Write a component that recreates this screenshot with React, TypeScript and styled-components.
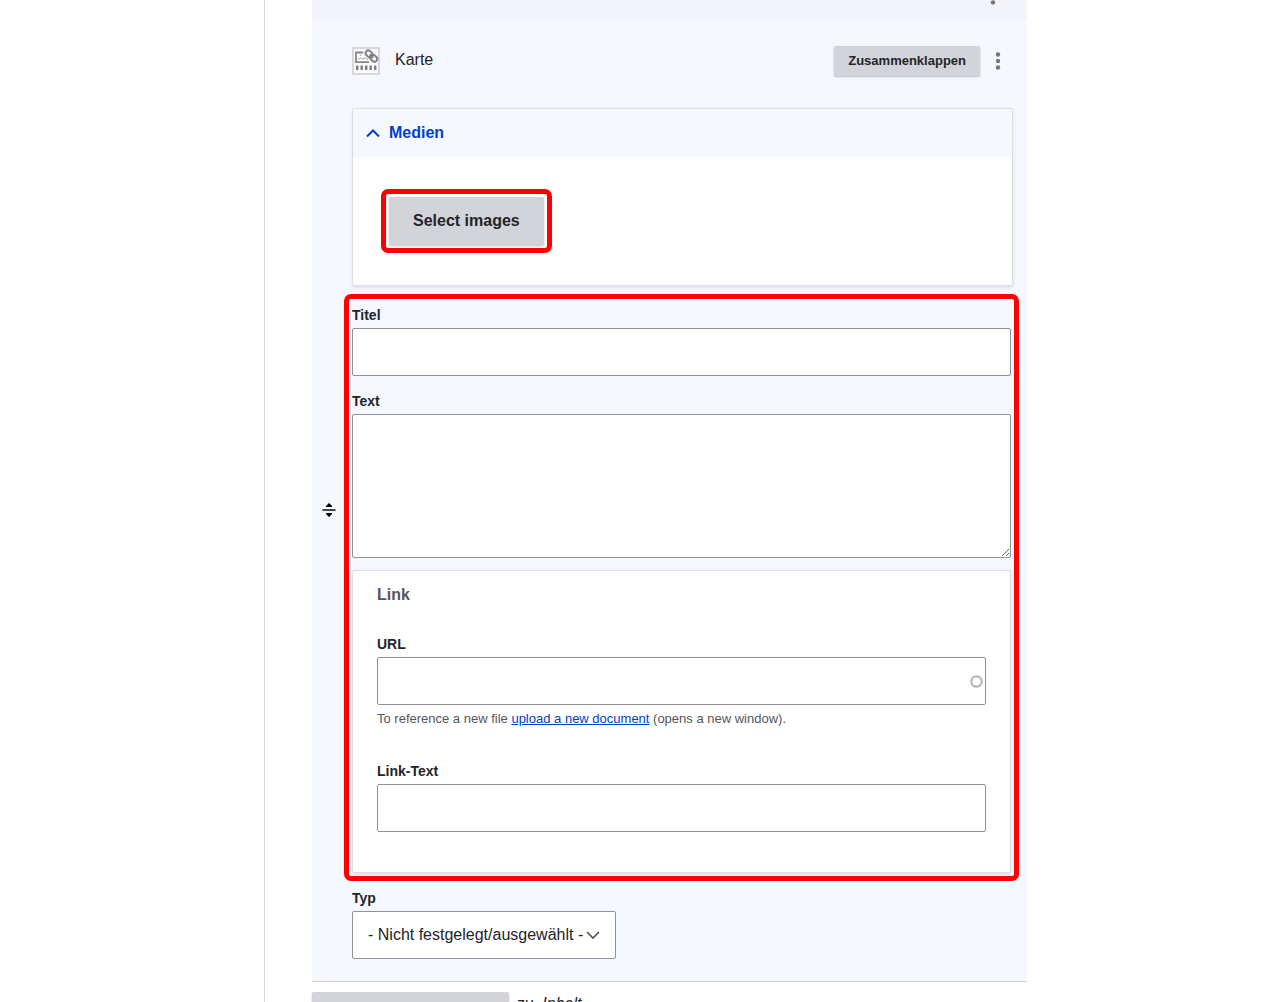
import React from "react";
import styled, { createGlobalStyle } from "styled-components";

const GlobalStyle = createGlobalStyle`
  *, *::before, *::after { box-sizing: border-box; }
  body {
    margin: 0;
    background: #fff;
    color: #232429;
    font-family: "Liberation Sans", Arial, sans-serif;
    font-size: 16px;
    line-height: 24px;
  }
`;

const Page = styled.div`
  display: grid;
  grid-template-columns: 264px minmax(0, 1fr) 253px;
  height: 100vh;
  overflow: hidden;
`;

const Main = styled.main`
  grid-column: 2;
  padding-left: 47px;
  border-left: 1px solid #d9dbe4;
`;

const PreviousRow = styled.div`
  display: flex;
  justify-content: flex-end;
  align-items: flex-start;
  height: 20px;
  padding-right: 19px;
  overflow: hidden;
  background: #f3f4f9;
`;

const Paragraph = styled.section`
  display: grid;
  grid-template-columns: 32px minmax(0, 1fr);
  padding: 26px 8px 22px 0;
  background: #f5f8ff;
  border-bottom: 1px solid #d0d2d8;
`;

const DragHandle = styled.button`
  display: flex;
  align-items: center;
  padding: 14px 0 0 10px;
  border: 0;
  background: none;
  cursor: move;
  svg { flex: none; }
`;

const Inset = styled.div`
  padding: 0 6px 0 8px;
`;

const Header = styled.header`
  display: flex;
  align-items: center;
  gap: 3px;
  height: 30px;
  margin-bottom: 32px;
`;

const TypeName = styled.span`
  flex: 1;
  padding: 0 0 2px 12px;
`;

const Button = styled.button<{ $small?: boolean }>`
  height: ${(p) => (p.$small ? 30 : 48)}px;
  padding: 0 ${(p) => (p.$small ? 14 : 24)}px;
  border: 0;
  border-radius: 2px;
  background: #d3d4d9;
  box-shadow: 0 1px 2px rgba(0, 0, 0, 0.25);
  color: #232429;
  font: bold ${(p) => (p.$small ? 13 : 16)}px/16px "Liberation Sans", Arial, sans-serif;
  cursor: pointer;
`;

const MenuButton = styled.button`
  display: flex;
  align-items: center;
  justify-content: center;
  width: 30px;
  height: 30px;
  padding: 0;
  border: 0;
  background: none;
`;

const Card = styled.div`
  border: 1px solid #dcdde3;
  border-radius: 2px;
  background: #fff;
  box-shadow: 0 2px 4px rgba(0, 0, 0, 0.1);
`;

const Details = styled(Card).attrs({ as: "details" })<{ open?: boolean }>``;

const Summary = styled.summary`
  display: flex;
  align-items: center;
  gap: 9px;
  height: 48px;
  padding-left: 13px;
  background: #f5f8ff;
  color: #003ecc;
  font-weight: bold;
  list-style: none;
  cursor: pointer;
`;

const MediaBody = styled.div`
  display: flex;
  padding: 32px 28px;
`;

const Highlight = styled.div`
  padding: 3px;
  border: 5px solid #f00;
  border-radius: 7px;
`;

const HighlightedFields = styled(Highlight)`
  margin-top: 8px;
  padding-top: 7px;
`;

const Field = styled.div<{ $gap?: number }>`
  display: flex;
  flex-direction: column;
  align-items: stretch;
  margin-top: ${(p) => p.$gap ?? 0}px;
`;

const Label = styled.label`
  align-self: flex-start;
  margin-bottom: 4px;
  font-size: 14px;
  font-weight: bold;
  line-height: 18px;
`;

const controlStyle = `
  display: block;
  width: 100%;
  height: 48px;
  padding: 0 15px;
  border: 1px solid #8e929c;
  border-radius: 2px;
  background: #fff;
  color: #232429;
  font: 16px/24px "Liberation Sans", Arial, sans-serif;
`;

const TextInput = styled.input`
  ${controlStyle}
`;

const TextArea = styled.textarea`
  ${controlStyle}
  height: 144px;
  padding: 11px 15px;
  resize: vertical;
`;

const Fieldset = styled(Card)`
  margin-top: 12px;
  padding: 12px 24px 40px;
`;

const Legend = styled.h3`
  margin: 0 0 28px;
  color: #55565b;
  font-size: 16px;
  line-height: 24px;
`;

const ControlWrap = styled.div<{ $inline?: boolean }>`
  position: relative;
  width: ${(p) => (p.$inline ? "264px" : "auto")};
`;

const Adornment = styled.span<{ $right: number }>`
  position: absolute;
  top: 0;
  bottom: 0;
  right: ${(p) => p.$right}px;
  display: flex;
  align-items: center;
  pointer-events: none;
`;

const Help = styled.p`
  margin: 6px 0 0;
  color: #55565b;
  font-size: 13px;
  line-height: 16px;
  a { color: #003ecc; }
`;

const Select = styled.select`
  ${controlStyle}
  appearance: none;
`;

const TypeField = styled(Field)`
  padding: 0 8px;
`;

const AddRow = styled.div`
  display: flex;
  align-items: flex-start;
  gap: 8px;
  margin-top: 10px;
`;

const AddButton = styled(Button)`
  width: 197px;
`;

const Target = styled.em`
  margin-left: 4px;
`;

const Dots = () => (
  <svg width="6" height="18" viewBox="0 0 6 18" fill="#75767b" aria-hidden="true">
    <circle cx="3" cy="2.5" r="2.2" />
    <circle cx="3" cy="9" r="2.2" />
    <circle cx="3" cy="15.5" r="2.2" />
  </svg>
);

const LastDot = () => (
  <svg width="30" height="6" viewBox="0 0 30 6" fill="#75767b" aria-hidden="true">
    <circle cx="15" cy="2.4" r="2.2" />
  </svg>
);

const CardIcon = () => (
  <svg width="28" height="28" viewBox="0 0 28 28" fill="none" aria-hidden="true">
    <rect x="1" y="1" width="26" height="26" fill="#fafafb" stroke="#d7d8dc" strokeWidth="2" />
    <path d="M11 5.5H4V15.2H17" stroke="#85868a" strokeWidth="1.8" />
    <path d="M6 12.8l2.5-2 2 1 2.5-1 3 1.8" stroke="#a6a7aa" strokeWidth="1" />
    <circle cx="8.5" cy="8.2" r="0.8" fill="#a6a7aa" />
    <g stroke="#7d7e82" strokeWidth="1.9" transform="rotate(43 19.3 9)">
      <rect x="12.4" y="6.3" width="7.6" height="5.4" rx="2.7" />
      <rect x="18.8" y="6.3" width="7.6" height="5.4" rx="2.7" />
      <path d="M17 9h5" />
    </g>
    <path d="M4 20.8h22" stroke="#7d7e82" strokeWidth="4.6" strokeDasharray="2.4 2.1" />
  </svg>
);

const Chevron = ({ up }: { up?: boolean }) => (
  <svg width="14" height="10" viewBox="0 0 14 10" fill="none" aria-hidden="true">
    <path
      d={up ? "M1 8.5L7 2.5L13 8.5" : "M1 2L7 8L13 2"}
      stroke={up ? "#003ecc" : "#55565b"}
      strokeWidth={up ? 2 : 1.7}
    />
  </svg>
);

export default function App() {
  return (
    <>
      <GlobalStyle />
      <Page>
        <Main>
          <PreviousRow>
            <LastDot />
          </PreviousRow>
          <Paragraph>
            <DragHandle type="button" aria-label="Verschieben">
              <svg width="14" height="14" viewBox="0 0 14 14" aria-hidden="true">
                <path d="M7 0L10 3V4H4V3Z M4 10H10V11L7 14L4 11Z" fill="#000" />
                <path d="M0.5 7H13.5" stroke="#333" strokeWidth="1.8" />
              </svg>
            </DragHandle>
            <div>
              <Inset>
                <Header>
                  <CardIcon />
                  <TypeName>Karte</TypeName>
                  <Button type="button" $small>Zusammenklappen</Button>
                  <MenuButton type="button" aria-label="Weitere Aktionen">
                    <Dots />
                  </MenuButton>
                </Header>
              </Inset>
              <Inset>
                <Details open>
                  <Summary>
                    <Chevron up />
                    Medien
                  </Summary>
                  <MediaBody>
                    <Highlight>
                      <Button type="button">Select images</Button>
                    </Highlight>
                  </MediaBody>
                </Details>
              </Inset>
              <HighlightedFields>
                <Field>
                  <Label htmlFor="title">Titel</Label>
                  <TextInput id="title" type="text" />
                </Field>
                <Field $gap={16}>
                  <Label htmlFor="text">Text</Label>
                  <TextArea id="text" />
                </Field>
                <Fieldset role="group" aria-labelledby="link-legend">
                  <Legend id="link-legend">Link</Legend>
                  <Field>
                    <Label htmlFor="url">URL</Label>
                    <ControlWrap>
                      <TextInput id="url" type="text" />
                      <Adornment $right={3}>
                        <svg width="13" height="13" viewBox="0 0 13 13" fill="none" aria-hidden="true">
                          <circle cx="6.5" cy="6.5" r="5.2" stroke="#b8b8b8" strokeWidth="2.2" />
                        </svg>
                      </Adornment>
                    </ControlWrap>
                    <Help>
                      To reference a new file <a href="#upload">upload a new document</a> (opens a new window).
                    </Help>
                  </Field>
                  <Field $gap={35}>
                    <Label htmlFor="link-text">Link-Text</Label>
                    <TextInput id="link-text" type="text" />
                  </Field>
                </Fieldset>
              </HighlightedFields>
              <TypeField $gap={8}>
                <Label htmlFor="type">Typ</Label>
                <ControlWrap $inline>
                  <Select id="type">
                    <option>- Nicht festgelegt/ausgewählt -</option>
                  </Select>
                  <Adornment $right={16}>
                    <Chevron />
                  </Adornment>
                </ControlWrap>
              </TypeField>
            </div>
          </Paragraph>
          <AddRow>
            <AddButton type="button" $small aria-label="Hinzufügen" />
            <span>
              zu <Target>Inhalt</Target>
            </span>
          </AddRow>
        </Main>
      </Page>
    </>
  );
}
